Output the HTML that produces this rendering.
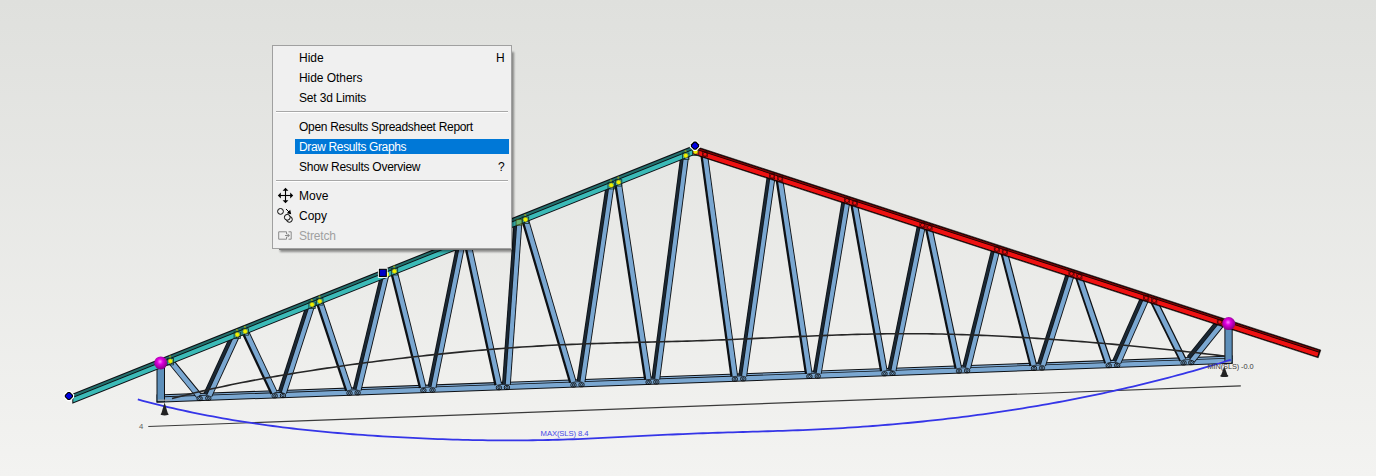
<!DOCTYPE html>
<html><head><meta charset="utf-8"><style>
html,body{margin:0;padding:0;width:1376px;height:476px;overflow:hidden}
body{background:linear-gradient(to bottom,#dfe0dd 0%,#f3f3f1 100%);position:relative;font-family:"Liberation Sans",sans-serif}
svg{position:absolute;left:0;top:0}
.menu{position:absolute;left:272px;top:45px;width:238px;height:202px;background:#f0f0f0;border:1px solid #a0a0a0}
.msh{position:absolute;left:279px;top:51px;width:233px;height:198.5px;background:#7a7a7a;box-shadow:1px 1px 2px 0.5px rgba(0,0,0,0.4)}
.t{position:absolute;left:299px;font-size:12px;line-height:14px;color:#000;white-space:pre}
.sep{position:absolute;left:276px;width:232px;height:1px;background:#a8a8a8;border-bottom:1px solid #fff}
</style></head><body>
<svg width="1376" height="476" viewBox="0 0 1376 476">
<polyline points="148.3,426.5 1240.8,385.9" fill="none" stroke="#3a3a3a" stroke-width="1.2"/>
<polygon points="156.50,394.42 1232.70,355.43 1232.70,363.73 156.50,402.72" fill="#0d1014"/>
<polygon points="156.50,395.52 1232.70,356.53 1232.70,357.63 156.50,396.62" fill="#86b0d8"/>
<polygon points="156.50,397.42 1232.70,358.43 1232.70,362.73 156.50,401.72" fill="#7aa7d1"/>
<polygon points="166.82,361.77 196.32,397.74 201.42,393.55 171.92,357.59" fill="#0d1014"/>
<polygon points="167.44,361.27 196.94,397.23 200.65,394.19 171.15,358.22" fill="#7aa7d1"/>
<polygon points="232.16,330.74 203.46,393.14 212.04,397.09 240.74,334.69" fill="#0d1014"/>
<polygon points="232.89,331.08 204.19,393.48 206.62,394.60 235.32,332.20" fill="#1a2733"/>
<polygon points="235.95,332.49 207.25,394.89 211.22,396.71 239.92,334.31" fill="#7aa7d1"/>
<polygon points="240.69,331.33 270.49,394.48 277.46,391.20 247.66,328.04" fill="#0d1014"/>
<polygon points="242.77,330.35 272.57,393.50 276.64,391.58 246.84,328.43" fill="#7aa7d1"/>
<polygon points="306.90,301.41 278.00,391.02 286.74,393.84 315.64,304.23" fill="#0d1014"/>
<polygon points="307.66,301.66 278.76,391.26 281.16,392.04 310.06,302.43" fill="#1a2733"/>
<polygon points="310.73,302.64 281.83,392.25 285.88,393.56 314.78,303.95" fill="#7aa7d1"/>
<polygon points="315.11,301.04 345.11,391.32 352.42,388.89 322.42,298.61" fill="#0d1014"/>
<polygon points="317.29,300.32 347.29,390.59 351.56,389.17 321.56,298.90" fill="#7aa7d1"/>
<polygon points="380.81,272.22 352.71,388.67 361.46,390.78 389.56,274.33" fill="#0d1014"/>
<polygon points="381.59,272.40 353.49,388.86 355.84,389.43 383.94,272.97" fill="#1a2733"/>
<polygon points="384.62,273.14 356.52,389.59 360.58,390.57 388.68,274.12" fill="#7aa7d1"/>
<polygon points="389.72,270.87 418.92,388.34 426.39,386.48 397.19,269.01" fill="#0d1014"/>
<polygon points="391.95,270.31 421.15,387.78 425.52,386.70 396.32,269.23" fill="#7aa7d1"/>
<polygon points="456.82,242.00 427.62,386.13 436.36,387.90 465.56,243.77" fill="#0d1014"/>
<polygon points="457.61,242.16 428.41,386.29 430.73,386.76 459.93,242.63" fill="#1a2733"/>
<polygon points="460.61,242.77 431.41,386.90 435.48,387.72 464.68,243.59" fill="#7aa7d1"/>
<polygon points="463.19,241.35 494.39,385.48 501.92,383.85 470.72,239.72" fill="#0d1014"/>
<polygon points="465.44,240.87 496.64,384.99 501.04,384.04 469.84,239.91" fill="#7aa7d1"/>
<polygon points="513.71,219.82 502.01,384.01 510.79,384.63 522.49,220.45" fill="#0d1014"/>
<polygon points="514.51,219.88 502.81,384.07 505.10,384.23 516.80,220.04" fill="#1a2733"/>
<polygon points="517.50,220.09 505.80,384.28 509.89,384.57 521.59,220.38" fill="#7aa7d1"/>
<polygon points="520.77,218.65 569.07,383.06 576.45,380.89 528.15,216.48" fill="#0d1014"/>
<polygon points="522.97,218.00 571.27,382.42 575.59,381.15 527.29,216.73" fill="#7aa7d1"/>
<polygon points="606.05,182.58 576.65,380.97 585.35,382.26 614.75,183.87" fill="#0d1014"/>
<polygon points="606.84,182.70 577.44,381.09 579.71,381.43 609.11,183.03" fill="#1a2733"/>
<polygon points="609.81,183.14 580.41,381.53 584.46,382.13 613.86,183.74" fill="#7aa7d1"/>
<polygon points="613.75,180.88 644.05,379.81 651.66,378.65 621.36,179.72" fill="#0d1014"/>
<polygon points="616.02,180.54 646.32,379.46 650.77,378.78 620.47,179.86" fill="#7aa7d1"/>
<polygon points="680.64,152.83 651.44,378.34 660.16,379.47 689.36,153.96" fill="#0d1014"/>
<polygon points="681.43,152.93 652.23,378.45 654.51,378.74 683.71,153.23" fill="#1a2733"/>
<polygon points="684.40,153.32 655.20,378.83 659.27,379.36 688.47,153.84" fill="#7aa7d1"/>
<polygon points="700.14,154.00 730.34,376.61 737.97,375.58 707.77,152.96" fill="#0d1014"/>
<polygon points="702.42,153.69 732.62,376.30 737.08,375.70 706.88,153.08" fill="#7aa7d1"/>
<polygon points="766.94,174.69 738.34,375.14 747.06,376.38 775.66,175.93" fill="#0d1014"/>
<polygon points="767.74,174.80 739.14,375.25 741.41,375.58 770.01,175.12" fill="#1a2733"/>
<polygon points="770.71,175.22 742.11,375.68 746.16,376.25 774.76,175.80" fill="#7aa7d1"/>
<polygon points="775.35,178.56 804.85,373.97 812.46,372.82 782.96,177.41" fill="#0d1014"/>
<polygon points="777.62,178.21 807.12,373.63 811.57,372.96 782.07,177.54" fill="#7aa7d1"/>
<polygon points="841.84,198.98 812.94,372.33 821.65,373.78 850.55,200.43" fill="#0d1014"/>
<polygon points="842.63,199.11 813.73,372.46 816.02,372.84 844.92,199.49" fill="#1a2733"/>
<polygon points="845.61,199.61 816.71,372.96 820.77,373.64 849.67,200.29" fill="#7aa7d1"/>
<polygon points="849.96,202.97 879.96,371.36 887.54,370.01 857.54,201.62" fill="#0d1014"/>
<polygon points="852.23,202.56 882.23,370.96 886.60,370.18 856.60,201.78" fill="#7aa7d1"/>
<polygon points="917.32,223.41 887.62,369.46 896.36,371.24 926.06,225.19" fill="#0d1014"/>
<polygon points="918.10,223.57 888.40,369.62 890.73,370.09 920.43,224.04" fill="#1a2733"/>
<polygon points="921.11,224.18 891.41,370.23 895.48,371.06 925.18,225.01" fill="#7aa7d1"/>
<polygon points="924.69,227.43 954.49,368.79 962.02,367.20 932.22,225.84" fill="#0d1014"/>
<polygon points="926.87,226.97 956.67,368.33 961.02,367.41 931.22,226.05" fill="#7aa7d1"/>
<polygon points="991.61,247.42 962.21,366.56 970.96,368.72 1000.36,249.58" fill="#0d1014"/>
<polygon points="992.38,247.62 962.98,366.76 965.34,367.34 994.74,248.20" fill="#1a2733"/>
<polygon points="995.42,248.36 966.02,367.51 970.09,368.51 999.49,249.37" fill="#7aa7d1"/>
<polygon points="1000.03,252.14 1029.53,366.25 1036.99,364.32 1007.49,250.21" fill="#0d1014"/>
<polygon points="1002.02,251.62 1031.52,365.74 1035.92,364.60 1006.42,250.49" fill="#7aa7d1"/>
<polygon points="1066.30,271.45 1037.10,363.54 1045.84,366.31 1075.04,274.22" fill="#0d1014"/>
<polygon points="1067.07,271.69 1037.87,363.78 1040.26,364.54 1069.46,272.45" fill="#1a2733"/>
<polygon points="1070.13,272.66 1040.93,364.75 1044.98,366.04 1074.18,273.95" fill="#7aa7d1"/>
<polygon points="1074.72,276.74 1104.32,363.84 1111.61,361.36 1082.01,274.26" fill="#0d1014"/>
<polygon points="1076.50,276.13 1106.10,363.23 1110.49,361.74 1080.89,274.64" fill="#7aa7d1"/>
<polygon points="1141.05,295.26 1112.35,360.29 1120.96,364.09 1149.66,299.06" fill="#0d1014"/>
<polygon points="1141.78,295.58 1113.08,360.61 1115.51,361.69 1144.21,296.65" fill="#1a2733"/>
<polygon points="1144.85,296.94 1116.15,361.97 1120.13,363.73 1148.83,298.69" fill="#7aa7d1"/>
<polygon points="1149.82,301.63 1179.42,361.62 1186.33,358.21 1156.73,298.22" fill="#0d1014"/>
<polygon points="1151.36,300.87 1180.96,360.86 1185.20,358.77 1155.60,298.78" fill="#7aa7d1"/>
<polygon points="1217.26,318.69 1186.86,356.34 1194.60,362.59 1225.00,324.94" fill="#0d1014"/>
<polygon points="1217.88,319.19 1187.48,356.84 1189.79,358.71 1220.19,321.05" fill="#1a2733"/>
<polygon points="1220.73,321.49 1190.33,359.15 1193.90,362.03 1224.30,324.37" fill="#7aa7d1"/>
<rect x="197.00" y="396.55" width="5.2" height="4.0" rx="1.6" fill="none" stroke="#0a0a0a" stroke-width="0.9"/>
<circle cx="199.60" cy="398.55" r="1.1" fill="none" stroke="#0a0a0a" stroke-width="0.8"/>
<rect x="205.70" y="396.24" width="5.2" height="4.0" rx="1.6" fill="none" stroke="#0a0a0a" stroke-width="0.9"/>
<circle cx="208.30" cy="398.24" r="1.1" fill="none" stroke="#0a0a0a" stroke-width="0.8"/>
<rect x="272.10" y="393.83" width="5.2" height="4.0" rx="1.6" fill="none" stroke="#0a0a0a" stroke-width="0.9"/>
<circle cx="274.70" cy="395.83" r="1.1" fill="none" stroke="#0a0a0a" stroke-width="0.8"/>
<rect x="280.30" y="393.54" width="5.2" height="4.0" rx="1.6" fill="none" stroke="#0a0a0a" stroke-width="0.9"/>
<circle cx="282.90" cy="395.54" r="1.1" fill="none" stroke="#0a0a0a" stroke-width="0.8"/>
<rect x="346.90" y="391.12" width="5.2" height="4.0" rx="1.6" fill="none" stroke="#0a0a0a" stroke-width="0.9"/>
<circle cx="349.50" cy="393.12" r="1.1" fill="none" stroke="#0a0a0a" stroke-width="0.8"/>
<rect x="355.00" y="390.83" width="5.2" height="4.0" rx="1.6" fill="none" stroke="#0a0a0a" stroke-width="0.9"/>
<circle cx="357.60" cy="392.83" r="1.1" fill="none" stroke="#0a0a0a" stroke-width="0.8"/>
<rect x="420.80" y="388.45" width="5.2" height="4.0" rx="1.6" fill="none" stroke="#0a0a0a" stroke-width="0.9"/>
<circle cx="423.40" cy="390.45" r="1.1" fill="none" stroke="#0a0a0a" stroke-width="0.8"/>
<rect x="429.90" y="388.12" width="5.2" height="4.0" rx="1.6" fill="none" stroke="#0a0a0a" stroke-width="0.9"/>
<circle cx="432.50" cy="390.12" r="1.1" fill="none" stroke="#0a0a0a" stroke-width="0.8"/>
<rect x="496.30" y="385.71" width="5.2" height="4.0" rx="1.6" fill="none" stroke="#0a0a0a" stroke-width="0.9"/>
<circle cx="498.90" cy="387.71" r="1.1" fill="none" stroke="#0a0a0a" stroke-width="0.8"/>
<rect x="504.30" y="385.42" width="5.2" height="4.0" rx="1.6" fill="none" stroke="#0a0a0a" stroke-width="0.9"/>
<circle cx="506.90" cy="387.42" r="1.1" fill="none" stroke="#0a0a0a" stroke-width="0.8"/>
<rect x="570.90" y="383.01" width="5.2" height="4.0" rx="1.6" fill="none" stroke="#0a0a0a" stroke-width="0.9"/>
<circle cx="573.50" cy="385.01" r="1.1" fill="none" stroke="#0a0a0a" stroke-width="0.8"/>
<rect x="578.90" y="382.72" width="5.2" height="4.0" rx="1.6" fill="none" stroke="#0a0a0a" stroke-width="0.9"/>
<circle cx="581.50" cy="384.72" r="1.1" fill="none" stroke="#0a0a0a" stroke-width="0.8"/>
<rect x="646.00" y="380.29" width="5.2" height="4.0" rx="1.6" fill="none" stroke="#0a0a0a" stroke-width="0.9"/>
<circle cx="648.60" cy="382.29" r="1.1" fill="none" stroke="#0a0a0a" stroke-width="0.8"/>
<rect x="653.70" y="380.01" width="5.2" height="4.0" rx="1.6" fill="none" stroke="#0a0a0a" stroke-width="0.9"/>
<circle cx="656.30" cy="382.01" r="1.1" fill="none" stroke="#0a0a0a" stroke-width="0.8"/>
<rect x="732.30" y="377.16" width="5.2" height="4.0" rx="1.6" fill="none" stroke="#0a0a0a" stroke-width="0.9"/>
<circle cx="734.90" cy="379.16" r="1.1" fill="none" stroke="#0a0a0a" stroke-width="0.8"/>
<rect x="740.60" y="376.86" width="5.2" height="4.0" rx="1.6" fill="none" stroke="#0a0a0a" stroke-width="0.9"/>
<circle cx="743.20" cy="378.86" r="1.1" fill="none" stroke="#0a0a0a" stroke-width="0.8"/>
<rect x="806.80" y="374.46" width="5.2" height="4.0" rx="1.6" fill="none" stroke="#0a0a0a" stroke-width="0.9"/>
<circle cx="809.40" cy="376.46" r="1.1" fill="none" stroke="#0a0a0a" stroke-width="0.8"/>
<rect x="815.20" y="374.16" width="5.2" height="4.0" rx="1.6" fill="none" stroke="#0a0a0a" stroke-width="0.9"/>
<circle cx="817.80" cy="376.16" r="1.1" fill="none" stroke="#0a0a0a" stroke-width="0.8"/>
<rect x="881.90" y="371.74" width="5.2" height="4.0" rx="1.6" fill="none" stroke="#0a0a0a" stroke-width="0.9"/>
<circle cx="884.50" cy="373.74" r="1.1" fill="none" stroke="#0a0a0a" stroke-width="0.8"/>
<rect x="889.90" y="371.45" width="5.2" height="4.0" rx="1.6" fill="none" stroke="#0a0a0a" stroke-width="0.9"/>
<circle cx="892.50" cy="373.45" r="1.1" fill="none" stroke="#0a0a0a" stroke-width="0.8"/>
<rect x="956.40" y="369.04" width="5.2" height="4.0" rx="1.6" fill="none" stroke="#0a0a0a" stroke-width="0.9"/>
<circle cx="959.00" cy="371.04" r="1.1" fill="none" stroke="#0a0a0a" stroke-width="0.8"/>
<rect x="964.50" y="368.75" width="5.2" height="4.0" rx="1.6" fill="none" stroke="#0a0a0a" stroke-width="0.9"/>
<circle cx="967.10" cy="370.75" r="1.1" fill="none" stroke="#0a0a0a" stroke-width="0.8"/>
<rect x="1031.40" y="366.33" width="5.2" height="4.0" rx="1.6" fill="none" stroke="#0a0a0a" stroke-width="0.9"/>
<circle cx="1034.00" cy="368.33" r="1.1" fill="none" stroke="#0a0a0a" stroke-width="0.8"/>
<rect x="1039.40" y="366.04" width="5.2" height="4.0" rx="1.6" fill="none" stroke="#0a0a0a" stroke-width="0.9"/>
<circle cx="1042.00" cy="368.04" r="1.1" fill="none" stroke="#0a0a0a" stroke-width="0.8"/>
<rect x="1106.10" y="363.62" width="5.2" height="4.0" rx="1.6" fill="none" stroke="#0a0a0a" stroke-width="0.9"/>
<circle cx="1108.70" cy="365.62" r="1.1" fill="none" stroke="#0a0a0a" stroke-width="0.8"/>
<rect x="1114.60" y="363.31" width="5.2" height="4.0" rx="1.6" fill="none" stroke="#0a0a0a" stroke-width="0.9"/>
<circle cx="1117.20" cy="365.31" r="1.1" fill="none" stroke="#0a0a0a" stroke-width="0.8"/>
<rect x="1181.00" y="360.91" width="5.2" height="4.0" rx="1.6" fill="none" stroke="#0a0a0a" stroke-width="0.9"/>
<circle cx="1183.60" cy="362.91" r="1.1" fill="none" stroke="#0a0a0a" stroke-width="0.8"/>
<rect x="1188.70" y="360.63" width="5.2" height="4.0" rx="1.6" fill="none" stroke="#0a0a0a" stroke-width="0.9"/>
<circle cx="1191.30" cy="362.63" r="1.1" fill="none" stroke="#0a0a0a" stroke-width="0.8"/>
<rect x="156.5" y="363" width="8.5" height="39.19999999999999" fill="#0d1014"/>
<rect x="157.5" y="363" width="6.5" height="38.19999999999999" fill="#5d8fba"/>
<rect x="1224.4" y="323.6" width="8.299999999999955" height="40.0" fill="#0d1014"/>
<rect x="1225.4" y="323.6" width="6.2999999999999545" height="39.0" fill="#5d8fba"/>
<rect x="1218" y="361.6" width="13" height="1.2" fill="#b8b8b8"/>
<rect x="158" y="399.6" width="12" height="1.2" fill="#a8a8a8"/>
<polygon points="72.30,393.72 693.00,145.51 693.00,155.51 72.30,403.72" fill="#0d1014"/>
<polygon points="73.30,394.52 693.00,146.71 693.00,148.91 73.30,396.72" fill="#23706d"/>
<polygon points="73.30,397.72 693.00,149.91 693.00,154.51 73.30,402.32" fill="#3bbab7"/>
<polygon points="693.00,145.54 1320.80,350.06 1318.20,357.81 693.00,154.14" fill="#0d0000" stroke="#0d0000" stroke-width="0.6" stroke-linejoin="round"/>
<polygon points="693.00,146.54 1319.30,350.57 1318.87,351.83 693.00,147.94" fill="#7a0606" stroke-linejoin="round"/>
<polygon points="693.00,148.74 1318.63,352.55 1317.30,356.52 693.00,153.14" fill="#ee1111" stroke-linejoin="round"/>
<path d="M172.00,398.58 L177.00,397.27 L182.00,395.98 L187.00,394.73 L192.00,393.50 L197.00,392.30 L202.00,391.12 L207.00,389.97 L212.00,388.84 L217.00,387.74 L222.00,386.67 L227.00,385.61 L232.00,384.58 L237.00,383.56 L242.00,382.57 L247.00,381.60 L252.00,380.65 L257.00,379.71 L262.00,378.79 L267.00,377.89 L272.00,377.01 L277.00,376.14 L282.00,375.28 L287.00,374.44 L292.00,373.62 L297.00,372.80 L302.00,372.00 L307.00,371.21 L312.00,370.42 L317.00,369.66 L322.00,368.90 L327.00,368.15 L332.00,367.42 L337.00,366.69 L342.00,365.98 L347.00,365.27 L352.00,364.58 L357.00,363.90 L362.00,363.23 L367.00,362.57 L372.00,361.92 L377.00,361.28 L382.00,360.65 L387.00,360.03 L392.00,359.42 L397.00,358.82 L402.00,358.22 L407.00,357.64 L412.00,357.07 L417.00,356.51 L422.00,355.95 L427.00,355.41 L432.00,354.87 L437.00,354.35 L442.00,353.84 L447.00,353.33 L452.00,352.84 L457.00,352.35 L462.00,351.88 L467.00,351.42 L472.00,350.97 L477.00,350.53 L482.00,350.10 L487.00,349.68 L492.00,349.27 L497.00,348.88 L502.00,348.49 L507.00,348.12 L512.00,347.76 L517.00,347.41 L522.00,347.07 L527.00,346.75 L532.00,346.43 L537.00,346.13 L542.00,345.85 L547.00,345.57 L552.00,345.31 L557.00,345.06 L562.00,344.82 L567.00,344.60 L572.00,344.39 L577.00,344.19 L582.00,344.00 L587.00,343.82 L592.00,343.65 L597.00,343.48 L602.00,343.33 L607.00,343.18 L612.00,343.04 L617.00,342.90 L622.00,342.77 L627.00,342.64 L632.00,342.51 L637.00,342.39 L642.00,342.26 L647.00,342.14 L652.00,342.02 L657.00,341.90 L662.00,341.77 L667.00,341.64 L672.00,341.51 L677.00,341.38 L682.00,341.24 L687.00,341.09 L692.00,340.94 L697.00,340.78 L702.00,340.62 L707.00,340.44 L712.00,340.26 L717.00,340.07 L722.00,339.88 L727.00,339.68 L732.00,339.47 L737.00,339.26 L742.00,339.05 L747.00,338.83 L752.00,338.61 L757.00,338.39 L762.00,338.17 L767.00,337.94 L772.00,337.72 L777.00,337.49 L782.00,337.27 L787.00,337.05 L792.00,336.83 L797.00,336.61 L802.00,336.40 L807.00,336.19 L812.00,335.98 L817.00,335.78 L822.00,335.59 L827.00,335.40 L832.00,335.21 L837.00,335.04 L842.00,334.87 L847.00,334.71 L852.00,334.56 L857.00,334.42 L862.00,334.29 L867.00,334.18 L872.00,334.07 L877.00,333.97 L882.00,333.89 L887.00,333.82 L892.00,333.77 L897.00,333.72 L902.00,333.70 L907.00,333.69 L912.00,333.69 L917.00,333.72 L922.00,333.75 L927.00,333.81 L932.00,333.88 L937.00,333.96 L942.00,334.06 L947.00,334.18 L952.00,334.30 L957.00,334.45 L962.00,334.60 L967.00,334.77 L972.00,334.95 L977.00,335.15 L982.00,335.35 L987.00,335.57 L992.00,335.80 L997.00,336.05 L1002.00,336.30 L1007.00,336.56 L1012.00,336.84 L1017.00,337.12 L1022.00,337.41 L1027.00,337.72 L1032.00,338.03 L1037.00,338.35 L1042.00,338.68 L1047.00,339.02 L1052.00,339.37 L1057.00,339.72 L1062.00,340.08 L1067.00,340.46 L1072.00,340.84 L1077.00,341.22 L1082.00,341.62 L1087.00,342.02 L1092.00,342.43 L1097.00,342.85 L1102.00,343.28 L1107.00,343.71 L1112.00,344.15 L1117.00,344.60 L1122.00,345.06 L1127.00,345.53 L1132.00,346.00 L1137.00,346.48 L1142.00,346.97 L1147.00,347.46 L1152.00,347.96 L1157.00,348.47 L1162.00,348.99 L1167.00,349.52 L1172.00,350.05 L1177.00,350.59 L1182.00,351.13 L1187.00,351.68 L1192.00,352.24 L1197.00,352.81 L1202.00,353.38 L1207.00,353.96 L1212.00,354.55 L1217.00,355.14 L1222.00,355.75 L1225.00,356.11" fill="none" stroke="#262626" stroke-width="1.6" stroke-linejoin="round"/>
<path d="M137.80,399.42 L142.80,400.76 L147.80,402.07 L152.80,403.35 L157.80,404.60 L162.80,405.82 L167.80,407.01 L172.80,408.18 L177.80,409.31 L182.80,410.42 L187.80,411.50 L192.80,412.55 L197.80,413.57 L202.80,414.57 L207.80,415.55 L212.80,416.49 L217.80,417.42 L222.80,418.31 L227.80,419.19 L232.80,420.03 L237.80,420.86 L242.80,421.66 L247.80,422.44 L252.80,423.20 L257.80,423.93 L262.80,424.65 L267.80,425.34 L272.80,426.01 L277.80,426.66 L282.80,427.29 L287.80,427.90 L292.80,428.49 L297.80,429.06 L302.80,429.62 L307.80,430.15 L312.80,430.67 L317.80,431.17 L322.80,431.66 L327.80,432.12 L332.80,432.58 L337.80,433.01 L342.80,433.43 L347.80,433.84 L352.80,434.23 L357.80,434.61 L362.80,434.97 L367.80,435.32 L372.80,435.66 L377.80,435.99 L382.80,436.30 L387.80,436.61 L392.80,436.90 L397.80,437.18 L402.80,437.45 L407.80,437.71 L412.80,437.96 L417.80,438.20 L422.80,438.42 L427.80,438.64 L432.80,438.84 L437.80,439.04 L442.80,439.22 L447.80,439.38 L452.80,439.54 L457.80,439.69 L462.80,439.82 L467.80,439.94 L472.80,440.04 L477.80,440.14 L482.80,440.22 L487.80,440.28 L492.80,440.34 L497.80,440.38 L502.80,440.40 L507.80,440.41 L512.80,440.41 L517.80,440.40 L522.80,440.37 L527.80,440.32 L532.80,440.26 L537.80,440.19 L542.80,440.10 L547.80,439.99 L552.80,439.87 L557.80,439.73 L562.80,439.58 L567.80,439.42 L572.80,439.24 L577.80,439.04 L582.80,438.84 L587.80,438.62 L592.80,438.40 L597.80,438.17 L602.80,437.93 L607.80,437.68 L612.80,437.43 L617.80,437.18 L622.80,436.92 L627.80,436.67 L632.80,436.41 L637.80,436.16 L642.80,435.90 L647.80,435.66 L652.80,435.41 L657.80,435.17 L662.80,434.93 L667.80,434.70 L672.80,434.48 L677.80,434.26 L682.80,434.04 L687.80,433.84 L692.80,433.64 L697.80,433.45 L702.80,433.26 L707.80,433.09 L712.80,432.92 L717.80,432.76 L722.80,432.60 L727.80,432.45 L732.80,432.30 L737.80,432.15 L742.80,432.00 L747.80,431.86 L752.80,431.71 L757.80,431.57 L762.80,431.42 L767.80,431.27 L772.80,431.11 L777.80,430.95 L782.80,430.79 L787.80,430.61 L792.80,430.43 L797.80,430.24 L802.80,430.04 L807.80,429.84 L812.80,429.62 L817.80,429.38 L822.80,429.14 L827.80,428.88 L832.80,428.61 L837.80,428.33 L842.80,428.03 L847.80,427.72 L852.80,427.40 L857.80,427.06 L862.80,426.71 L867.80,426.35 L872.80,425.98 L877.80,425.59 L882.80,425.19 L887.80,424.77 L892.80,424.34 L897.80,423.90 L902.80,423.45 L907.80,422.98 L912.80,422.49 L917.80,422.00 L922.80,421.49 L927.80,420.96 L932.80,420.43 L937.80,419.87 L942.80,419.31 L947.80,418.73 L952.80,418.14 L957.80,417.53 L962.80,416.91 L967.80,416.27 L972.80,415.62 L977.80,414.96 L982.80,414.28 L987.80,413.58 L992.80,412.87 L997.80,412.15 L1002.80,411.41 L1007.80,410.65 L1012.80,409.88 L1017.80,409.10 L1022.80,408.30 L1027.80,407.48 L1032.80,406.65 L1037.80,405.80 L1042.80,404.93 L1047.80,404.05 L1052.80,403.16 L1057.80,402.24 L1062.80,401.32 L1067.80,400.37 L1072.80,399.41 L1077.80,398.43 L1082.80,397.43 L1087.80,396.42 L1092.80,395.39 L1097.80,394.34 L1102.80,393.28 L1107.80,392.20 L1112.80,391.10 L1117.80,389.98 L1122.80,388.85 L1127.80,387.69 L1132.80,386.52 L1137.80,385.34 L1142.80,384.13 L1147.80,382.90 L1152.80,381.66 L1157.80,380.40 L1162.80,379.12 L1167.80,377.82 L1172.80,376.50 L1177.80,375.16 L1182.80,373.81 L1187.80,372.43 L1192.80,371.03 L1197.80,369.62 L1202.80,368.18 L1207.80,366.72 L1212.80,365.25 L1217.80,363.75 L1222.80,362.24 L1227.80,360.70 L1230.80,359.77" fill="none" stroke="#3535e8" stroke-width="1.8" stroke-linejoin="round"/>
<rect x="167.20" y="358.50" width="6.4" height="6.4" fill="none" stroke="#10302a" stroke-width="0.8"/>
<circle cx="170.10" cy="356.50" r="1.1" fill="#8a9a20"/>
<circle cx="170.4" cy="361.1" r="2.3" fill="#f0f000" stroke="#6a7a20" stroke-width="0.5"/>
<rect x="234.10" y="332.00" width="6.4" height="6.4" fill="none" stroke="#10302a" stroke-width="0.8"/>
<circle cx="237.00" cy="330.00" r="1.1" fill="#8a9a20"/>
<circle cx="237.3" cy="334.6" r="2.3" fill="#f0f000" stroke="#6a7a20" stroke-width="0.5"/>
<rect x="242.00" y="328.80" width="6.4" height="6.4" fill="none" stroke="#10302a" stroke-width="0.8"/>
<circle cx="244.90" cy="326.80" r="1.1" fill="#8a9a20"/>
<circle cx="245.2" cy="331.4" r="2.3" fill="#f0f000" stroke="#6a7a20" stroke-width="0.5"/>
<rect x="308.90" y="302.00" width="6.4" height="6.4" fill="none" stroke="#10302a" stroke-width="0.8"/>
<circle cx="311.80" cy="300.00" r="1.1" fill="#8a9a20"/>
<circle cx="312.1" cy="304.6" r="2.3" fill="#f0f000" stroke="#6a7a20" stroke-width="0.5"/>
<rect x="316.60" y="298.70" width="6.4" height="6.4" fill="none" stroke="#10302a" stroke-width="0.8"/>
<circle cx="319.50" cy="296.70" r="1.1" fill="#8a9a20"/>
<circle cx="319.8" cy="301.3" r="2.3" fill="#f0f000" stroke="#6a7a20" stroke-width="0.5"/>
<rect x="391.30" y="268.60" width="6.4" height="6.4" fill="none" stroke="#10302a" stroke-width="0.8"/>
<circle cx="394.20" cy="266.60" r="1.1" fill="#8a9a20"/>
<circle cx="394.5" cy="271.2" r="2.3" fill="#f0f000" stroke="#6a7a20" stroke-width="0.5"/>
<rect x="522.30" y="217.00" width="6.4" height="6.4" fill="none" stroke="#10302a" stroke-width="0.8"/>
<circle cx="525.20" cy="215.00" r="1.1" fill="#8a9a20"/>
<circle cx="525.5" cy="219.6" r="2.3" fill="#f0f000" stroke="#6a7a20" stroke-width="0.5"/>
<rect x="608.00" y="182.60" width="6.4" height="6.4" fill="none" stroke="#10302a" stroke-width="0.8"/>
<circle cx="610.90" cy="180.60" r="1.1" fill="#8a9a20"/>
<circle cx="611.2" cy="185.2" r="2.3" fill="#f0f000" stroke="#6a7a20" stroke-width="0.5"/>
<rect x="615.40" y="179.70" width="6.4" height="6.4" fill="none" stroke="#10302a" stroke-width="0.8"/>
<circle cx="618.30" cy="177.70" r="1.1" fill="#8a9a20"/>
<circle cx="618.6" cy="182.3" r="2.3" fill="#f0f000" stroke="#6a7a20" stroke-width="0.5"/>
<rect x="682.60" y="153.00" width="6.4" height="6.4" fill="none" stroke="#10302a" stroke-width="0.8"/>
<circle cx="685.50" cy="151.00" r="1.1" fill="#8a9a20"/>
<circle cx="685.8" cy="155.6" r="2.3" fill="#f0f000" stroke="#6a7a20" stroke-width="0.5"/>
<rect x="692.40" y="149.10" width="6.4" height="6.4" fill="none" stroke="#10302a" stroke-width="0.8"/>
<circle cx="695.30" cy="147.10" r="1.1" fill="#8a9a20"/>
<circle cx="695.6" cy="151.7" r="2.3" fill="#f0f000" stroke="#6a7a20" stroke-width="0.5"/>
<rect x="702.40" y="151.65" width="5.2" height="5.2" fill="none" stroke="#300" stroke-width="0.6"/>
<circle cx="705.00" cy="154.25" r="2" fill="none" stroke="#200" stroke-width="0.7"/>
<rect x="769.50" y="173.51" width="5.2" height="5.2" fill="none" stroke="#300" stroke-width="0.6"/>
<circle cx="772.10" cy="176.11" r="2" fill="none" stroke="#200" stroke-width="0.7"/>
<rect x="777.60" y="176.15" width="5.2" height="5.2" fill="none" stroke="#300" stroke-width="0.6"/>
<circle cx="780.20" cy="178.75" r="2" fill="none" stroke="#200" stroke-width="0.7"/>
<rect x="844.40" y="197.91" width="5.2" height="5.2" fill="none" stroke="#300" stroke-width="0.6"/>
<circle cx="847.00" cy="200.51" r="2" fill="none" stroke="#200" stroke-width="0.7"/>
<rect x="852.20" y="200.45" width="5.2" height="5.2" fill="none" stroke="#300" stroke-width="0.6"/>
<circle cx="854.80" cy="203.05" r="2" fill="none" stroke="#200" stroke-width="0.7"/>
<rect x="919.90" y="222.50" width="5.2" height="5.2" fill="none" stroke="#300" stroke-width="0.6"/>
<circle cx="922.50" cy="225.10" r="2" fill="none" stroke="#200" stroke-width="0.7"/>
<rect x="926.90" y="224.78" width="5.2" height="5.2" fill="none" stroke="#300" stroke-width="0.6"/>
<circle cx="929.50" cy="227.38" r="2" fill="none" stroke="#200" stroke-width="0.7"/>
<rect x="994.20" y="246.71" width="5.2" height="5.2" fill="none" stroke="#300" stroke-width="0.6"/>
<circle cx="996.80" cy="249.31" r="2" fill="none" stroke="#200" stroke-width="0.7"/>
<rect x="1002.20" y="249.31" width="5.2" height="5.2" fill="none" stroke="#300" stroke-width="0.6"/>
<circle cx="1004.80" cy="251.91" r="2" fill="none" stroke="#200" stroke-width="0.7"/>
<rect x="1068.90" y="271.04" width="5.2" height="5.2" fill="none" stroke="#300" stroke-width="0.6"/>
<circle cx="1071.50" cy="273.64" r="2" fill="none" stroke="#200" stroke-width="0.7"/>
<rect x="1076.80" y="273.62" width="5.2" height="5.2" fill="none" stroke="#300" stroke-width="0.6"/>
<circle cx="1079.40" cy="276.22" r="2" fill="none" stroke="#200" stroke-width="0.7"/>
<rect x="1143.60" y="295.38" width="5.2" height="5.2" fill="none" stroke="#300" stroke-width="0.6"/>
<circle cx="1146.20" cy="297.98" r="2" fill="none" stroke="#200" stroke-width="0.7"/>
<rect x="1151.70" y="298.02" width="5.2" height="5.2" fill="none" stroke="#300" stroke-width="0.6"/>
<circle cx="1154.30" cy="300.62" r="2" fill="none" stroke="#200" stroke-width="0.7"/>
<rect x="1217.20" y="319.35" width="5.2" height="5.2" fill="none" stroke="#300" stroke-width="0.6"/>
<circle cx="1219.80" cy="321.95" r="2" fill="none" stroke="#200" stroke-width="0.7"/>
<circle cx="386.5" cy="274.3" r="2.6" fill="#f0f000"/>
<rect x="516" y="219.2" width="6" height="6" fill="#a0b020" fill-opacity="0.45" stroke="#2a3a10" stroke-width="0.7"/>
<rect x="377.9" y="267.8" width="9.8" height="10.1" fill="#fff"/>
<rect x="379.4" y="269.3" width="6.9" height="7.1" fill="#0000c8" stroke="#000" stroke-width="1.1"/>
<polygon points="63.70,394.40 67.30,390.80 70.50,390.80 74.10,394.40 74.10,397.60 70.50,401.20 67.30,401.20 63.70,397.60" fill="#fff"/>
<polygon points="64.80,394.90 67.80,391.90 70.00,391.90 73.00,394.90 73.00,397.10 70.00,400.10 67.80,400.10 64.80,397.10" fill="#000"/>
<polygon points="65.90,395.50 68.40,393.00 69.40,393.00 71.90,395.50 71.90,396.50 69.40,399.00 68.40,399.00 65.90,396.50" fill="#0000e0"/>
<polygon points="689.80,144.10 693.40,140.50 696.60,140.50 700.20,144.10 700.20,147.30 696.60,150.90 693.40,150.90 689.80,147.30" fill="#fff"/>
<polygon points="690.90,144.60 693.90,141.60 696.10,141.60 699.10,144.60 699.10,146.80 696.10,149.80 693.90,149.80 690.90,146.80" fill="#000"/>
<polygon points="692.00,145.20 694.50,142.70 695.50,142.70 698.00,145.20 698.00,146.20 695.50,148.70 694.50,148.70 692.00,146.20" fill="#0000e0"/>
<polygon points="164.6,402.6 161.0,414.6 168.2,414.6" fill="#222"/>
<ellipse cx="164.6" cy="414.3" rx="4" ry="1.1" fill="#222"/>
<polygon points="1224.3,366.2 1220.7,376.2 1227.8999999999999,376.2" fill="#222"/>
<ellipse cx="1224.3" cy="375.9" rx="4" ry="1.1" fill="#222"/>
<defs><radialGradient id="mg" cx="0.45" cy="0.4" r="0.6"><stop offset="0" stop-color="#ff80ff"/><stop offset="0.35" stop-color="#e000e0"/><stop offset="1" stop-color="#800080"/></radialGradient></defs>
<circle cx="160.7" cy="362.9" r="6.5" fill="url(#mg)"/>
<circle cx="1228.7" cy="323.6" r="6.5" fill="url(#mg)"/>
<text x="139" y="428.6" font-family="Liberation Sans" font-size="7.7" fill="#606060">4</text>
<text x="540.6" y="436.3" font-family="Liberation Sans" font-size="7.7" letter-spacing="-0.12" fill="#4848e6">MAX(SLS) 8.4</text>
<text x="1207.5" y="368.8" font-family="Liberation Sans" font-size="7.4" letter-spacing="-0.1" fill="#3a3a3a">MIN(SLS) -0.0</text>
</svg>
<div class="msh"></div><div class="menu"></div>
<div class="sep" style="top:111px"></div>
<div class="sep" style="top:180px"></div>
<div class="t" style="top:50.8px;">Hide</div><div class="t" style="top:50.8px;left:496px">H</div><div class="t" style="top:70.8px;letter-spacing:-0.06px">Hide Others</div><div class="t" style="top:90.8px;letter-spacing:-0.17px">Set 3d Limits</div><div class="t" style="top:120.0px;letter-spacing:-0.31px">Open Results Spreadsheet Report</div><div style="position:absolute;left:295px;top:139px;width:214px;height:15px;background:#0078d7"></div><div class="t" style="top:140.0px;letter-spacing:-0.36px;color:#fff">Draw Results Graphs</div><div class="t" style="top:160.0px;letter-spacing:-0.26px">Show Results Overview</div><div class="t" style="top:160.0px;left:498px">?</div><div class="t" style="top:189.4px;">Move</div><div class="t" style="top:209.4px;">Copy</div><div class="t" style="top:229.4px;letter-spacing:-0.17px;color:#a0a0a0">Stretch</div>
<svg width="30" height="60" viewBox="272 185 30 60" style="left:272px;top:185px">
<g stroke="#000" stroke-width="1.1" fill="none">
<line x1="285.5" y1="190" x2="285.5" y2="201"/><line x1="280" y1="195.5" x2="291" y2="195.5"/>
</g>
<g fill="#000">
<polygon points="285.5,187.8 282.6,190.8 288.4,190.8"/><polygon points="285.5,203.2 282.6,200.2 288.4,200.2"/>
<polygon points="277.8,195.5 280.8,192.6 280.8,198.4"/><polygon points="293.2,195.5 290.2,192.6 290.2,198.4"/>
</g>
<g stroke="#000" stroke-width="1" fill="none">
<circle cx="280.5" cy="211.4" r="2.9"/>
<line x1="286" y1="209" x2="289.2" y2="212.2"/>
<circle cx="289.4" cy="219.4" r="2.9"/>
<circle cx="287.3" cy="217.3" r="2.9" fill="#f0f0f0"/>
</g>
<polygon points="291.2,214.2 286.8,213.2 290.2,209.8" fill="#000"/>
<g stroke="#8a8a8a" stroke-width="1" fill="none">
<polyline points="286.5,234.2 286.5,231.8 278.7,231.8 278.7,239.2 286.5,239.2 286.5,236.8"/>
<polyline points="288.5,231.8 291.2,231.8 291.2,239.2 288.5,239.2"/>
<line x1="285" y1="235.5" x2="288.5" y2="235.5"/>
</g>
<polygon points="290,235.5 287.6,233.3 287.6,237.7" fill="#8a8a8a"/>
</svg>
</body></html>
